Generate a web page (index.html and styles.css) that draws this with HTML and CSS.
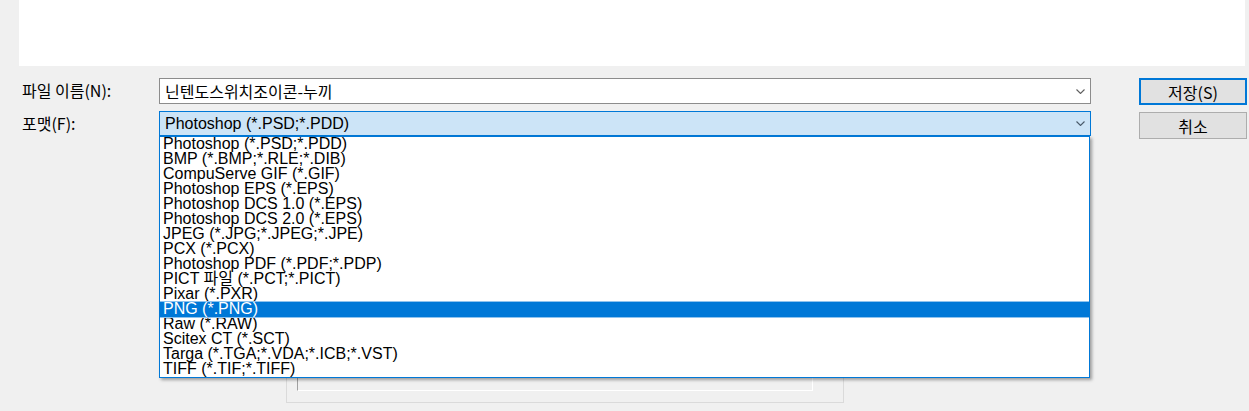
FILE: index.html
```html
<!DOCTYPE html>
<html>
<head>
    <meta charset="utf-8">
    <link rel="stylesheet" href="styles.css">
</head>
<body>
    <div class="preview-pane"></div>

    <div class="save-form">
        <label class="field-label">파일 이름(N):</label>
        <div class="combo">
            <span class="combo-text">닌텐도스위치조이콘-누끼</span>
            <svg class="chevron" width="9" height="5" viewBox="0 0 9 5"><path d="M0.5 0.5 L4.5 4.5 L8.5 0.5" fill="none" stroke="#5f5f5f" stroke-width="1.1"/></svg>
        </div>
        <button class="btn btn-default">저장(S)</button>

        <label class="field-label">포맷(F):</label>
        <div class="combo combo-open">
            <span class="combo-text latin">Photoshop (*.PSD;*.PDD)</span>
            <svg class="chevron" width="9" height="5" viewBox="0 0 9 5"><path d="M0.5 0.5 L4.5 4.5 L8.5 0.5" fill="none" stroke="#4a5a6a" stroke-width="1.1"/></svg>

            <!-- 펼쳐진 포맷 목록 -->
            <ul class="format-list">
                <li>Photoshop (*.PSD;*.PDD)</li>
                <li>BMP (*.BMP;*.RLE;*.DIB)</li>
                <li>CompuServe GIF (*.GIF)</li>
                <li>Photoshop EPS (*.EPS)</li>
                <li>Photoshop DCS 1.0 (*.EPS)</li>
                <li>Photoshop DCS 2.0 (*.EPS)</li>
                <li>JPEG (*.JPG;*.JPEG;*.JPE)</li>
                <li>PCX (*.PCX)</li>
                <li>Photoshop PDF (*.PDF;*.PDP)</li>
                <li>PICT 파일 (*.PCT;*.PICT)</li>
                <li>Pixar (*.PXR)</li>
                <li class="selected">PNG (*.PNG)</li>
                <li>Raw (*.RAW)</li>
                <li>Scitex CT (*.SCT)</li>
                <li>Targa (*.TGA;*.VDA;*.ICB;*.VST)</li>
                <li>TIFF (*.TIF;*.TIFF)</li>
            </ul>
        </div>
        <button class="btn">취소</button>
    </div>

    <div class="options-box">
        <div class="options-field"></div>
    </div>
</body>
</html>
```

FILE: styles.css
```css
body {
    margin: 0;
    padding: 0;
    width: 1249px;
    height: 411px;
    overflow: hidden;
    background-color: #f0f0f0;
    font-family: "Noto Sans CJK KR", "Liberation Sans", sans-serif;
    font-size: 16px;
    color: #000;
}

.preview-pane {
    margin-left: 19px;
    width: 1226px;
    height: 66px;
    background-color: #fff;
}

.save-form {
    display: grid;
    grid-template-columns: 137px 932px 156px;
    grid-template-rows: 27px 28px;
    row-gap: 6px;
    align-items: start;
    margin-top: 12px;
    padding-left: 22px;
}

.field-label {
    height: 25px;
    line-height: 25px;
    white-space: nowrap;
}

.combo {
    position: relative;
    box-sizing: border-box;
    height: 26px;
    display: flex;
    align-items: center;
    justify-content: space-between;
    padding: 0 5px 0 5px;
    background-color: #fff;
    border: 1px solid #8c8c8c;
}

.combo-text {
    white-space: nowrap;
    line-height: 20px;
}

.latin {
    font-family: "Liberation Sans", Arial, sans-serif;
    font-size: 16px;
}

.combo-open {
    height: 25px;
    background-color: #cce4f7;
    border-color: #0078d7;
}

.chevron {
    flex-shrink: 0;
}

.format-list {
    position: absolute;
    top: calc(100% + 1px);
    left: -1px;
    width: 931px;
    box-sizing: border-box;
    margin: 0;
    padding: 0;
    list-style: none;
    background-color: #fff;
    border: 1px solid #0078d7;
    box-shadow: 2px 2px 3px rgba(0, 0, 0, 0.35);
    font-family: "Liberation Sans", "Noto Sans CJK KR", sans-serif;
    font-size: 16px;
    z-index: 10;
}

.format-list li {
    position: relative;
    height: 15px;
    line-height: 14px;
    padding-left: 3px;
    white-space: nowrap;
}

.format-list li.selected {
    background-color: #0078d7;
    color: #fff;
    box-shadow: 0 -1px 0 #8fc3ee, 0 1px 0 #8fc3ee;
    z-index: 1;
}

.btn {
    justify-self: end;
    box-sizing: border-box;
    width: 108px;
    height: 27px;
    padding: 0;
    margin: 0;
    background-color: #e1e1e1;
    border: 1px solid #adadad;
    font-family: "Noto Sans CJK KR", "Liberation Sans", sans-serif;
    font-size: 16px;
    color: #000;
}

.btn-default {
    border: 2px solid #0078d7;
}

.save-form .btn:last-child {
    margin-top: 1px;
}

.options-box {
    box-sizing: border-box;
    margin: 11px 0 0 286px;
    width: 558px;
    height: 253px;
    border: 1px solid #dadada;
    padding: 9px 0 0 10px;
}

.options-field {
    box-sizing: border-box;
    width: 516px;
    height: 231px;
    border-top: 1px solid #a0a0a0;
    border-left: 1px solid #a0a0a0;
    border-right: 1px solid #fff;
    border-bottom: 1px solid #fff;
}
```
